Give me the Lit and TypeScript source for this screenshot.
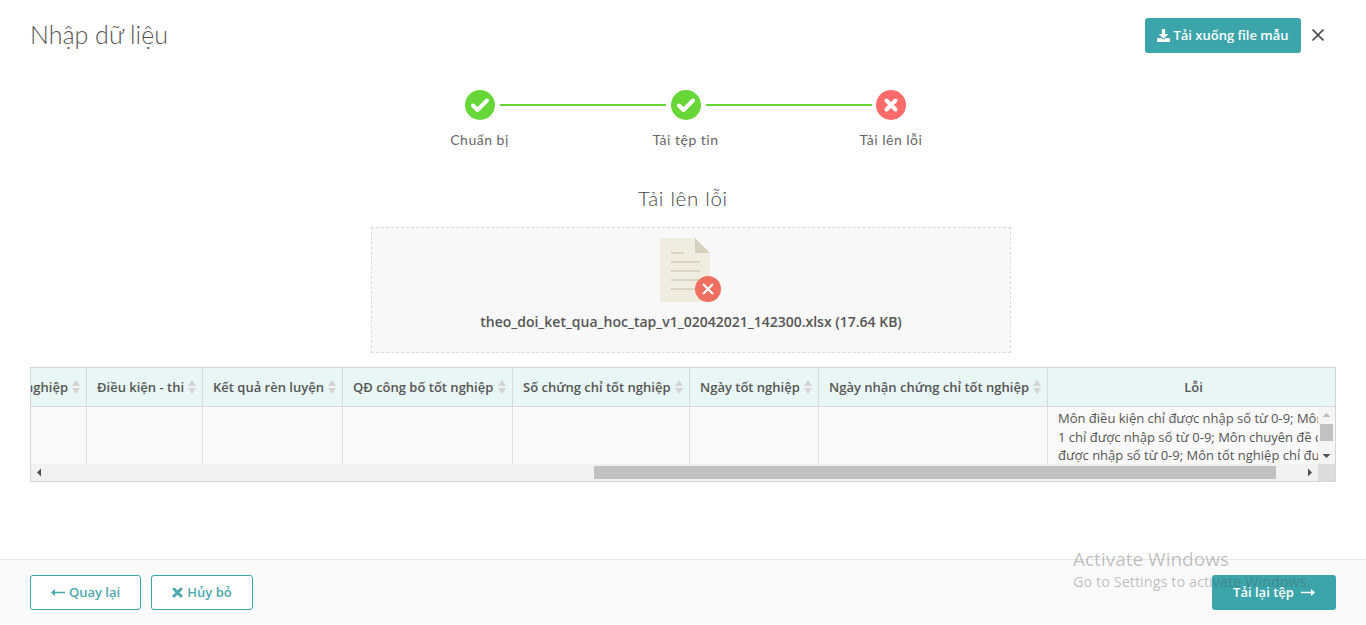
import { LitElement, html, css, svg } from "lit";
import { customElement } from "lit/decorators.js";

const check = svg`<path d="M8 15.5l4.5 4.5L22 10.5" fill="none" stroke="#fff" stroke-width="4" stroke-linecap="round" stroke-linejoin="round"/>`;
const cross = svg`<path d="M10.5 10.5l9 9M19.5 10.5l-9 9" fill="none" stroke="#fff" stroke-width="4" stroke-linecap="round"/>`;

const columns = [
  { label: "Năm tốt nghiệp", cls: "clip" },
  { label: "Điều kiện - thi", cls: "" },
  { label: "Kết quả rèn luyện", cls: "" },
  { label: "QĐ công bố tốt nghiệp", cls: "" },
  { label: "Số chứng chỉ tốt nghiệp", cls: "" },
  { label: "Ngày tốt nghiệp", cls: "" },
  { label: "Ngày nhận chứng chỉ tốt nghiệp", cls: "" },
];

@customElement("app-root")
export class AppRoot extends LitElement {
  static styles = css`
    :host {
      display: flex;
      flex-direction: column;
      height: 625px;
      width: 1366px;
      overflow: hidden;
      position: relative;
      background: #fff;
      font-family: "Open Sans", sans-serif;
      color: #555;
    }
    .display { font-family: Lato, sans-serif; }
    .header {
      display: flex;
      align-items: center;
      justify-content: space-between;
      padding: 18px 41px 0 30px;
      height: 35px;
    }
    .title { font-size: 25px; font-weight: 300; color: #555; line-height: 30px; padding-bottom: 4px; }
    .header-right { display: flex; align-items: center; gap: 10px; }
    .btn {
      display: inline-flex;
      align-items: center;
      justify-content: center;
      height: 35px;
      box-sizing: border-box;
      border-radius: 3px;
      padding-bottom: 1px;
      font-size: 13px;
      font-weight: 600;
      gap: 4px;
    }
    .solid { background: #3ca5ab; color: #fff; }
    .outline { border: 1px solid #3ca5ab; color: #4ba9ae; background: #fff; }
    .dl { width: 156px; gap: 3px; }
    .dl svg { width: 13px; height: 13px; fill: #fff; }
    .close { width: 14px; height: 14px; display: block; margin-right: 0; margin-top: -2px; }
    .stepper {
      display: grid;
      grid-template-columns: repeat(3, auto);
      justify-content: center;
      margin-top: 37px;
      padding-left: 4px;
      height: 60px;
      position: relative;
    }
    .step {
      width: 206px;
      display: flex;
      flex-direction: column;
      align-items: center;
      position: relative;
    }
    .step:last-child { width: 205px; }
    .dot { width: 30px; height: 30px; display: block; }
    .step-label { margin-top: 11px; font-size: 14px; line-height: 17px; color: #666; font-weight: 400; letter-spacing: 0.5px; }
    .line {
      position: absolute;
      top: 14px;
      left: calc(50% + 20px);
      width: 166px;
      height: 2px;
      background: #66d737;
    }
    .section-title {
      text-align: center;
      font-size: 20.5px;
      font-weight: 300;
      line-height: 26px;
      margin-top: 35px;
      color: #444;
      letter-spacing: 0.7px;
    }
    .drop {
      width: 640px;
      height: 126px;
      box-sizing: border-box;
      margin: 16px auto 0 371px;
      border: 1px dashed #dcdcdc;
      background: #f8f8f8;
      display: flex;
      flex-direction: column;
      align-items: center;
    }
    .file-icon { width: 62px; height: 66px; margin: 10px 0 0; display: block; }
    .file-name { font-size: 14px; font-weight: 600; color: #555; line-height: 18px; margin-top: 9px; }
    .table {
      margin: 14px 30px 0;
      width: 1306px;
      height: 115px;
      box-sizing: border-box;
      border: 1px solid #d4d4d4;
      display: flex;
      flex-direction: column;
      position: relative;
    }
    .row { display: grid; grid-template-columns: 56px 116px 140px 170px 177px 129px 229px 1fr; }
    .thead { height: 40px; background: #e9f6f6; border-bottom: 1px solid #d9d9d9; box-sizing: border-box; }
    .th {
      display: flex;
      align-items: center;
      justify-content: space-between;
      padding: 0 6px 0 10px;
      font-size: 13px;
      font-weight: 600;
      color: #555;
      white-space: nowrap;
      border-right: 1px solid #d9d9d9;
      overflow: hidden;
      min-width: 0;
    }
    .th.clip { justify-content: flex-end; padding: 0 6px 0 0; gap: 4px; }
    .th.clip .txt { flex: none; }
    .th:last-child { border-right: 0; justify-content: center; }
    .sort { width: 8px; height: 14px; flex: none; display: block; }
    .tbody { height: 57px; background: #f9f9f9; }
    .td { border-right: 1px solid #dfdfdf; min-width: 0; }
    .err {
      border-right: 0;
      position: relative;
      overflow: hidden;
      padding: 2px 0 0 10px;
      font-size: 13px;
      line-height: 18.57px;
      color: #555;
      white-space: nowrap;
    }
    .vbar {
      position: absolute;
      top: 0;
      right: 0;
      width: 17px;
      height: 57px;
      background: #f5f5f5;
      display: flex;
      flex-direction: column;
      align-items: center;
    }
    .v-btn { height: 17px; width: 17px; display: block; flex: none; }
    .v-thumb { width: 13px; height: 17px; background: #c1c1c1; margin-top: 0; }
    .v-space { flex: 1; }
    .hbar { height: 17px; background: #f1f1f1; display: flex; align-items: stretch; }
    .h-btn { width: 17px; height: 17px; display: block; flex: none; }
    .h-space { width: 546px; flex: none; }
    .h-thumb { width: 682px; height: 13px; margin-top: 2px; background: #c1c1c1; flex: none; }
    .h-space2 { flex: 1; }
    .corner { width: 17px; background: #dcdcdc; flex: none; }
    .spacer { flex: 1; }
    .footer {
      height: 65px;
      box-sizing: border-box;
      margin-bottom: 1px;
      border-top: 1px solid #e7e7e7;
      background: #fafafa;
      padding: 15px 30px 0;
      display: flex;
      gap: 10px;
    }
    .back { width: 111px; }
    .cancel { width: 102px; }
    .retry { width: 124px; margin-left: auto; gap: 7px; }
    .btn svg.arrow { width: 14px; height: 9px; display: block; }
    .btn svg.x { width: 11px; height: 11px; display: block; }
    .watermark {
      position: absolute;
      left: 1073px;
      top: 546px;
      color: rgba(80, 80, 80, 0.36);
      pointer-events: none;
      font-family: "Open Sans", sans-serif;
    }
    .wm1 { font-size: 19px; line-height: 26px; }
    .wm2 { font-size: 14.5px; line-height: 19px; white-space: nowrap; }
  `;

  private sort() {
    return html`<svg class="sort" viewBox="0 0 8 14"><path d="M4 0l4 6H0z" fill="#d4d4d4"/><path d="M4 14l4-6H0z" fill="#d4d4d4"/></svg>`;
  }

  render() {
    return html`
      <div class="header">
        <div class="title display">Nhập dữ liệu</div>
        <div class="header-right">
          <div class="btn solid dl">
            <svg viewBox="0 0 512 512"><path d="M216 0h80c13.3 0 24 10.7 24 24v168h87.7c17.8 0 26.7 21.5 14.1 34.1L269.7 378.3c-7.5 7.5-19.8 7.5-27.3 0L90.1 226.1c-12.6-12.6-3.7-34.1 14.1-34.1H192V24c0-13.3 10.7-24 24-24zm296 376v112c0 13.3-10.7 24-24 24H24c-13.3 0-24-10.7-24-24V376c0-13.3 10.7-24 24-24h146.7l49 49c20.1 20.1 52.5 20.1 72.6 0l49-49H488c13.3 0 24 10.7 24 24z"/></svg>
            <span>Tải xuống file mẫu</span>
          </div>
          <svg class="close" viewBox="0 0 14 14"><path d="M1.5 1.5l11 11M12.5 1.5l-11 11" stroke="#444" stroke-width="1.7" fill="none"/></svg>
        </div>
      </div>

      <div class="stepper display">
        <div class="step">
          <svg class="dot" viewBox="0 0 30 30"><circle cx="15" cy="15" r="15" fill="#66d737"/>${check}</svg>
          <div class="line"></div>
          <div class="step-label">Chuẩn bị</div>
        </div>
        <div class="step">
          <svg class="dot" viewBox="0 0 30 30"><circle cx="15" cy="15" r="15" fill="#66d737"/>${check}</svg>
          <div class="line"></div>
          <div class="step-label">Tải tệp tin</div>
        </div>
        <div class="step">
          <svg class="dot" viewBox="0 0 30 30"><circle cx="15" cy="15" r="15" fill="#ff6b6b"/>${cross}</svg>
          <div class="step-label">Tải lên lỗi</div>
        </div>
      </div>

      <div class="section-title display">Tải lên lỗi</div>

      <div class="drop">
        <svg class="file-icon" viewBox="0 0 62 66">
          <path d="M0 0h35l15 15v49H0z" fill="#f0ece0"/>
          <path d="M35 0l15 15H35z" fill="#d6d1bc"/>
          <g fill="#d9d5c2">
            <rect x="11" y="14" width="13" height="2"/>
            <rect x="11" y="23" width="29" height="2"/>
            <rect x="11" y="32" width="29" height="2"/>
            <rect x="11" y="41" width="29" height="2"/>
            <rect x="11" y="50" width="29" height="2"/>
          </g>
          <circle cx="48" cy="51" r="13" fill="#ee6f60"/>
          <path d="M43 46l10 10M53 46l-10 10" stroke="#fff" stroke-width="2.2" fill="none"/>
        </svg>
        <div class="file-name">theo_doi_ket_qua_hoc_tap_v1_02042021_142300.xlsx (17.64 KB)</div>
      </div>

      <div class="table">
        <div class="row thead">
          ${columns.map(
            (c) => html`<div class="th ${c.cls}"><span class="txt">${c.label}</span>${this.sort()}</div>`
          )}
          <div class="th"><span>Lỗi</span></div>
        </div>
        <div class="row tbody">
          ${columns.map(() => html`<div class="td"></div>`)}
          <div class="td err">
            Môn điều kiện chỉ được nhập số từ 0-9; Môn<br />
            1 chỉ được nhập số từ 0-9; Môn chuyên đề chỉ<br />
            được nhập số từ 0-9; Môn tốt nghiệp chỉ được
            <div class="vbar">
              <svg class="v-btn" viewBox="0 0 17 17"><path d="M8.5 6l4 4h-8z" fill="#bbb"/></svg>
              <div class="v-thumb"></div>
              <div class="v-space"></div>
              <svg class="v-btn" viewBox="0 0 17 17"><path d="M8.5 11l4-4h-8z" fill="#505050"/></svg>
            </div>
          </div>
        </div>
        <div class="hbar">
          <svg class="h-btn" viewBox="0 0 17 17"><path d="M6 8.5l4-4v8z" fill="#505050"/></svg>
          <div class="h-space"></div>
          <div class="h-thumb"></div>
          <div class="h-space2"></div>
          <svg class="h-btn" viewBox="0 0 17 17"><path d="M11 8.5l-4-4v8z" fill="#505050"/></svg>
          <div class="corner"></div>
        </div>
      </div>

      <div class="spacer"></div>

      <div class="footer">
        <div class="btn outline back">
          <svg class="arrow" viewBox="0 0 14 9"><path d="M14 3.8H4V1L0 4.5 4 8V5.2H14z" fill="#4ba9ae"/></svg>
          <span>Quay lại</span>
        </div>
        <div class="btn outline cancel">
          <svg class="x" viewBox="0 0 11 11"><path d="M2 2l7 7M9 2l-7 7" stroke="#4ba9ae" stroke-width="3" fill="none" stroke-linecap="round"/></svg>
          <span>Hủy bỏ</span>
        </div>
        <div class="btn solid retry">
          <span>Tải lại tệp</span>
          <svg class="arrow" viewBox="0 0 14 9"><path d="M0 3.8H10V1l4 3.5L10 8V5.2H0z" fill="#fff"/></svg>
        </div>
      </div>

      <div class="watermark">
        <div class="wm1">Activate Windows</div>
        <div class="wm2">Go to Settings to activate Windows.</div>
      </div>
    `;
  }
}
